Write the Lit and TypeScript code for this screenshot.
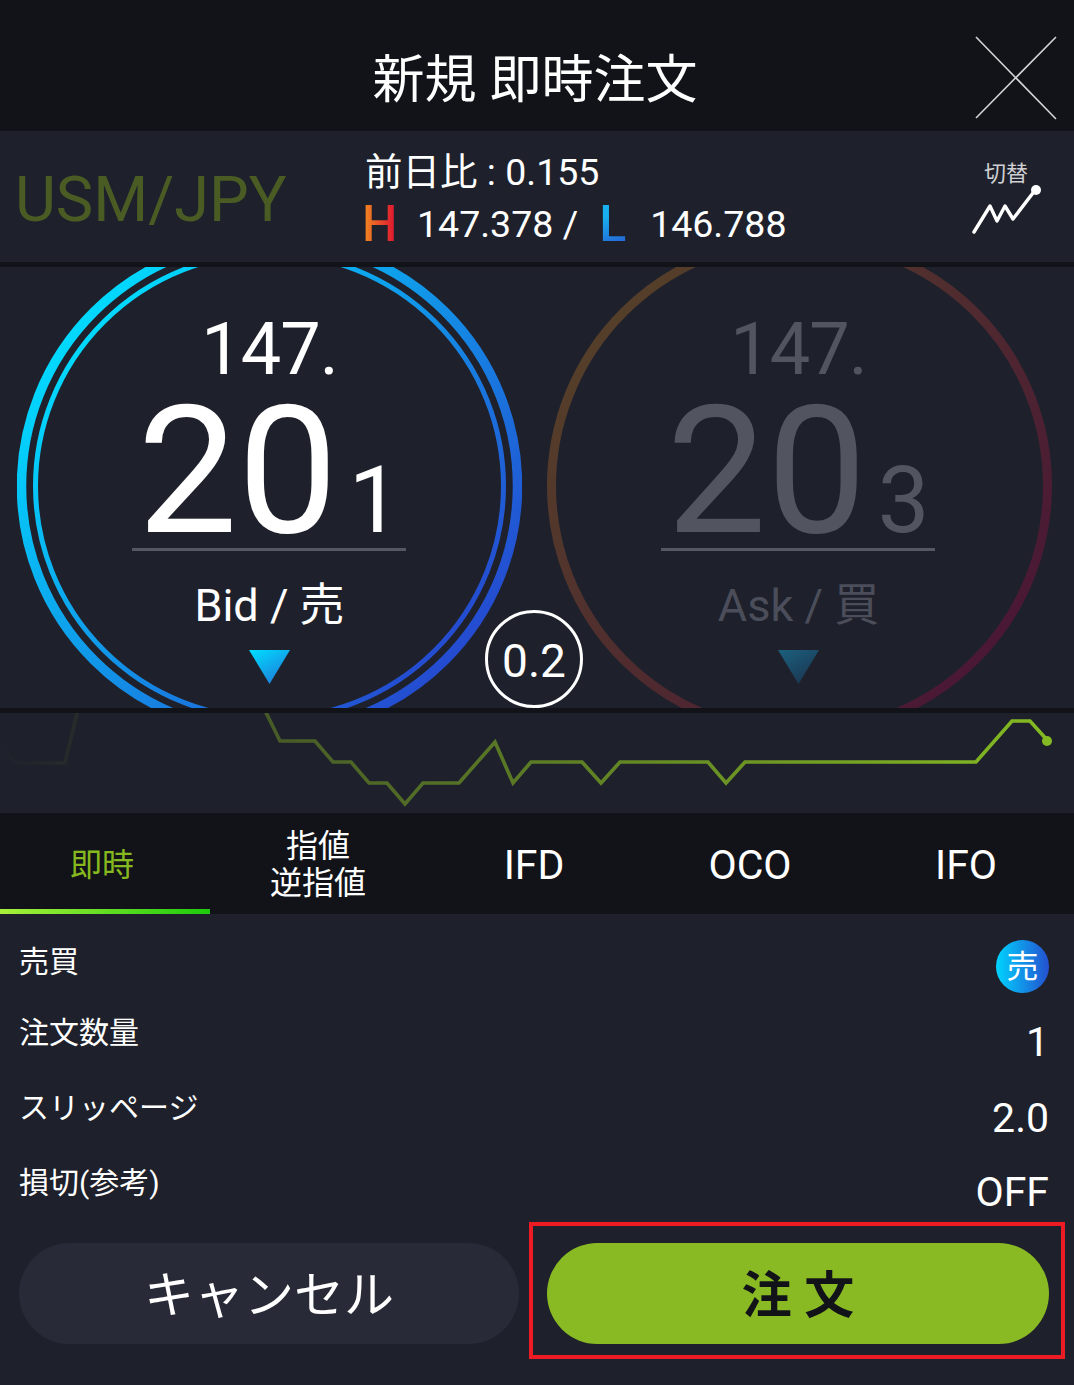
import { LitElement, css, html, svg, type TemplateResult } from "lit";
import { customElement } from "lit/decorators.js";

const CHART_POINTS =
  "0,745 15,763 65,763 85,680 250,680 280,741 315,741 333,762 351,762 369,783 387,783 405,804 423,783 459,783 495,742 513,783 531,762 582,762 601,783 620,762 708,762 726,783 745,762 976,762 1012,721 1030,721 1048,741";

const TABS = ["IFD", "OCO", "IFO"];

@customElement("app-root")
export class AppRoot extends LitElement {
  private ring(id: string, stops: [string, string], rings: [number, number][]): TemplateResult {
    return html`<svg class="ring" viewBox="0 0 505 505" width="505" height="502" preserveAspectRatio="none">
      <defs>
        <linearGradient id=${id} x1="0.1" y1="0.15" x2="0.9" y2="0.85">
          <stop offset="0" stop-color=${stops[0]}></stop>
          <stop offset="1" stop-color=${stops[1]}></stop>
        </linearGradient>
      </defs>
      ${rings.map(
        ([r, w]) => svg`<circle cx="252.5" cy="252.5" r=${r} fill="none" stroke=${`url(#${id})`} stroke-width=${w}></circle>`
      )}
    </svg>`;
  }

  private quote(kind: string, last: string, label: string, rings: TemplateResult, tri: [string, string]): TemplateResult {
    return html`<div class="quote ${kind}">
      ${rings}
      <div class="head">147.</div>
      <div class="big"><span>20</span><span class="pip">${last}</span></div>
      <div class="label">${label}</div>
      <svg class="tri" width="41" height="34" viewBox="0 0 41 34">
        <defs>
          <linearGradient id="tri-${kind}" x1="0.1" y1="0" x2="0.8" y2="1">
            <stop offset="0" stop-color=${tri[0]}></stop>
            <stop offset="1" stop-color=${tri[1]}></stop>
          </linearGradient>
        </defs>
        <polygon points="0,0 41,0 20.5,34" fill="url(#tri-${kind})"></polygon>
      </svg>
    </div>`;
  }

  render(): TemplateResult {
    return html`
      <header class="top">
        <h1>新規 即時注文</h1>
        <svg class="close" width="82" height="84" viewBox="0 0 82 84">
          <path d="M1 1 81 83M81 1 1 82" stroke="#d4d4d6" stroke-width="1.6" fill="none"></path>
        </svg>
      </header>

      <section class="info">
        <div class="pair">USM/JPY</div>
        <div class="stats">
          <div class="line">前日比 : 0.155</div>
          <div class="line hl">
            <span class="h">H</span><span class="hv">147.378 /</span>
            <span class="l">L</span><span class="lv">146.788</span>
          </div>
        </div>
        <div class="switch">
          <span>切替</span>
          <svg width="70" height="52" viewBox="0 0 70 52">
            <polyline points="3,45 19,19 26,34 34,19 42,32 65,2" fill="none" stroke="#fff" stroke-width="3.4" stroke-linecap="round" stroke-linejoin="round"></polyline>
            <circle cx="65" cy="3" r="5" fill="#fff"></circle>
          </svg>
        </div>
      </section>

      <section class="quotes">
        ${this.quote(
          "bid",
          "1",
          "Bid / 売",
          this.ring("ring-bid", ["#00dcff", "#2548cf"], [[248, 9.5], [234, 5]]),
          ["#00dcff", "#1f78d8"]
        )}
        ${this.quote(
          "ask",
          "3",
          "Ask / 買",
          this.ring("ring-ask", ["#553f29", "#4a1735"], [[248, 9]]),
          ["#1b5f7c", "#1b3450"]
        )}
        <div class="spread"><span>0.2</span></div>
      </section>

      <section class="chart">
        <svg width="1074" height="100" viewBox="0 713 1074 100">
          <defs>
            <linearGradient id="line" gradientUnits="userSpaceOnUse" x1="0" y1="0" x2="1048" y2="0">
              <stop offset="0" stop-color="#1e212b"></stop>
              <stop offset="0.08" stop-color="#282d2a"></stop>
              <stop offset="0.25" stop-color="#465a27"></stop>
              <stop offset="1" stop-color="#84ba22"></stop>
            </linearGradient>
          </defs>
          <polyline points=${CHART_POINTS} fill="none" stroke="url(#line)" stroke-width="3.6"></polyline>
          <circle cx="1047" cy="741" r="5" fill="#84ba22"></circle>
        </svg>
      </section>

      <nav class="tabs">
        <div class="tab active">即時</div>
        <div class="tab">指値<br />逆指値</div>
        ${TABS.map((t) => html`<div class="tab latin">${t}</div>`)}
      </nav>

      <section class="form">
        <div class="row"><span>売買</span><span class="badge">売</span></div>
        <div class="row"><span>注文数量</span><span class="val">1</span></div>
        <div class="row"><span>スリッページ</span><span class="val">2.0</span></div>
        <div class="row"><span>損切(参考)</span><span class="val">OFF</span></div>
      </section>

      <footer class="actions">
        <button class="cancel">キャンセル</button>
        <button class="order">注 文</button>
        <div class="marker"></div>
      </footer>
    `;
  }

  static styles = css`
    :host {
      display: block;
      width: 1074px;
      height: 1385px;
      overflow: hidden;
      background: #1e212b;
      color: #fff;
      font-family: Roboto, "Noto Sans CJK JP", sans-serif;
    }

    .top {
      height: 131px;
      box-sizing: border-box;
      padding-top: 30px;
      background: #111318;
      display: grid;
      grid-template-columns: 1fr auto 1fr;
      align-items: center;
    }

    h1 {
      grid-column: 2;
      margin: 0 0 0 -4px;
      font-size: 52px;
      font-weight: 400;
      line-height: 60px;
    }

    .close {
      grid-column: 3;
      justify-self: end;
      margin-right: 17px;
      margin-top: -5px;
    }

    .info {
      height: 131px;
      padding-top: 3px;
      box-sizing: border-box;
      display: grid;
      grid-template-columns: 365px 1fr auto;
      align-items: center;
    }

    .pair {
      padding-left: 15px;
      margin-top: 3px;
      font-size: 63px;
      line-height: 70px;
      color: #4a5c24;
      white-space: nowrap;
    }

    .line {
      font-size: 37.5px;
      line-height: 52px;
      white-space: nowrap;
    }

    .hl {
      display: flex;
      align-items: center;
    }

    .h,
    .l {
      font-size: 50px;
      font-weight: 500;
      line-height: 52px;
      -webkit-background-clip: text;
      background-clip: text;
      color: transparent;
    }

    .h {
      background-image: linear-gradient(90deg, #f08020 4px, #e02030 30px);
      width: 55px;
      margin-left: -3px;
    }

    .l {
      background-image: linear-gradient(160deg, #18b0ee 30%, #2468d8 75%);
      width: 51px;
      margin-left: 21px;
    }

    .switch {
      width: 70px;
      margin: 4px 33px 0 0;
      display: flex;
      flex-direction: column;
      align-items: center;
      color: #d0d0d4;
      font-size: 22px;
      line-height: 26px;
    }

    .switch svg {
      overflow: visible;
    }

    .quotes {
      position: relative;
      height: 441px;
      border-top: 5px solid #111318;
      border-bottom: 5px solid #111318;
      display: flex;
      gap: 24px;
      padding-left: 17px;
      overflow: hidden;
    }

    .quote {
      position: relative;
      width: 505px;
      display: flex;
      flex-direction: column;
      align-items: center;
    }

    .ring {
      position: absolute;
      left: 0;
      top: -32px;
    }

    .ask .ring {
      left: 1px;
    }

    .head {
      margin-top: 41px;
      font-size: 72px;
      line-height: 84px;
      letter-spacing: -1px;
    }

    .big {
      width: 274px;
      height: 164px;
      margin: -5px 0 0 -1px;
      box-sizing: border-box;
      border-bottom: 3px solid #555762;
      display: flex;
      justify-content: center;
      align-items: baseline;
      font-size: 178px;
      line-height: 169px;
    }

    .pip {
      font-size: 92px;
      margin-left: 11px;
    }

    .label {
      margin-top: 28px;
      font-size: 45px;
      line-height: 54px;
    }

    .tri {
      margin-top: 17px;
    }

    .ask {
      color: #525560;
    }

    .ask .label {
      color: #4b4e5a;
    }

    .spread {
      position: absolute;
      left: 485px;
      top: 343px;
      width: 98px;
      height: 98px;
      box-sizing: border-box;
      padding-top: 3px;
      border: 3px solid #fff;
      border-radius: 50%;
      background: #1e212b;
      display: flex;
      align-items: center;
      justify-content: center;
      font-size: 46px;
    }

    .chart {
      height: 100px;
    }

    .chart svg {
      display: block;
    }

    .tabs {
      height: 101px;
      box-sizing: border-box;
      padding-top: 3px;
      background: #111318;
      display: grid;
      grid-template-columns: 210px repeat(4, 216px);
      align-items: center;
      text-align: center;
    }

    .tab {
      font-size: 32px;
      line-height: 37px;
    }

    .active {
      align-self: stretch;
      padding-right: 6px;
      line-height: 98px;
      color: #86b81f;
      position: relative;
    }

    .active::after {
      content: "";
      position: absolute;
      left: 0;
      right: 0;
      bottom: 0;
      height: 5px;
      background: linear-gradient(90deg, #a8f03a, #1ccb0c);
    }

    .latin {
      font-size: 41px;
    }

    .form {
      padding: 28px 25px 0 19px;
      font-size: 30px;
    }

    .row {
      display: flex;
      justify-content: space-between;
      line-height: 40px;
    }

    .row:nth-child(1) {
      height: 71px;
    }

    .row:nth-child(2),
    .row:nth-child(3) {
      height: 75px;
    }

    .row:nth-child(4) {
      height: 76px;
    }

    .val {
      font-size: 41px;
      line-height: 46px;
      margin-top: 6px;
    }

    .row:nth-child(3) .val {
      margin-top: 7px;
    }

    .badge {
      width: 53px;
      height: 53px;
      margin-top: -2px;
      border-radius: 50%;
      background: linear-gradient(90deg, #00d4ff, #2450d0);
      display: flex;
      align-items: center;
      justify-content: center;
      font-size: 32px;
    }

    .actions {
      position: relative;
      display: grid;
      grid-template-columns: 500px 502px;
      gap: 28px;
      padding: 4px 25px 0 19px;
    }

    button {
      height: 101px;
      border: 0;
      border-radius: 51px;
      font-family: inherit;
      font-size: 50px;
      padding: 0 0 5px;
    }

    .cancel {
      background: #282b37;
      color: #fff;
    }

    .order {
      background: #8aba23;
      color: #111318;
      font-weight: 700;
    }

    .marker {
      position: absolute;
      left: 529px;
      top: -17px;
      width: 536px;
      height: 137px;
      box-sizing: border-box;
      border: 4px solid #ed1c24;
    }
  `;
}

declare global {
  interface HTMLElementTagNameMap {
    "app-root": AppRoot;
  }
}
